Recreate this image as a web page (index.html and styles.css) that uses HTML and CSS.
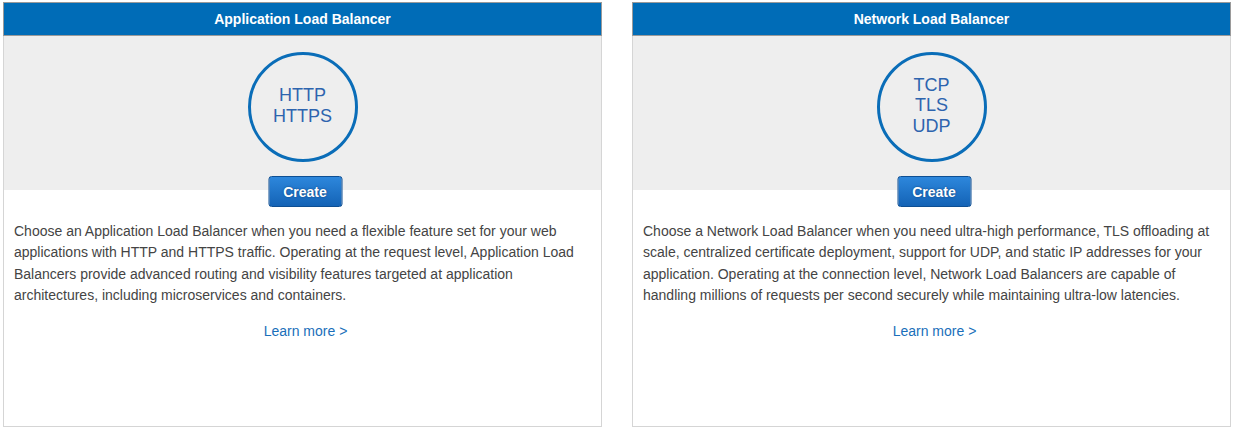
FILE: index.html
```html
<!DOCTYPE html>
<html>
<head>
<meta charset="utf-8">
<link rel="stylesheet" href="styles.css">
</head>
<body>
<div class="cards">
  <div class="card">
    <div class="card-header">Application Load Balancer</div>
    <div class="hero">
      <div class="circle"><span>HTTP<br>HTTPS</span></div>
      <button class="create">Create</button>
    </div>
    <div class="body">
      <p class="desc">Choose an Application Load Balancer when you need a flexible feature set for your web applications with HTTP and HTTPS traffic. Operating at the request level, Application Load Balancers provide advanced routing and visibility features targeted at application architectures, including microservices and containers.</p>
      <a class="learn" href="#">Learn more &gt;</a>
    </div>
  </div>
  <div class="card">
    <div class="card-header">Network Load Balancer</div>
    <div class="hero">
      <div class="circle"><span>TCP<br>TLS<br>UDP</span></div>
      <button class="create">Create</button>
    </div>
    <div class="body">
      <p class="desc">Choose a Network Load Balancer when you need ultra-high performance, TLS offloading at scale, centralized certificate deployment, support for UDP, and static IP addresses for your application. Operating at the connection level, Network Load Balancers are capable of handling millions of requests per second securely while maintaining ultra-low latencies.</p>
      <a class="learn" href="#">Learn more &gt;</a>
    </div>
  </div>
</div>
</body>
</html>
```
FILE: styles.css
```css
html, body {
  margin: 0;
  padding: 0;
  background: #fff;
}
body {
  padding: 2px 4px 0 3px;
  font-family: Arial, "Liberation Sans", sans-serif;
}
.cards {
  display: flex;
  gap: 30px;
}
.card {
  width: 599px;
  height: 425px;
  box-sizing: border-box;
  border: 1px solid #d5d5d5;
  display: flex;
  flex-direction: column;
}
.card-header {
  background: #006cb7;
  border: 1px solid #9a9a9a;
  margin: -1px -1px 0 -1px;
  height: 34px;
  box-sizing: border-box;
  color: #fff;
  font-weight: bold;
  font-size: 14px;
  display: flex;
  align-items: center;
  justify-content: center;
}
.hero {
  background: #eeeeee;
  height: 154px;
  display: flex;
  flex-direction: column;
  align-items: center;
  position: relative;
}
.circle {
  margin-top: 16px;
  width: 110px;
  height: 110px;
  box-sizing: border-box;
  border: 3px solid #0a6db8;
  border-radius: 50%;
  display: flex;
  align-items: center;
  justify-content: center;
  text-align: center;
  color: #2d64ae;
  font-size: 18px;
  line-height: 20.5px;
}
.circle span {
  margin-top: -3px;
}
.create {
  position: absolute;
  top: 140px;
  left: 50%;
  transform: translateX(calc(-50% + 2.5px));
  width: 74px;
  height: 31px;
  box-sizing: border-box;
  border: 1px solid #0e4f93;
  border-radius: 3px;
  background: linear-gradient(#2d87dc, #1463b6);
  color: #fff;
  font-family: Arial, "Liberation Sans", sans-serif;
  font-weight: bold;
  font-size: 14px;
  text-shadow: 0 0 2px #0b3f78;
  padding: 0;
  z-index: 1;
}
.body {
  padding: 31px 10px 0 10px;
  display: flex;
  flex-direction: column;
  align-items: center;
}
.desc {
  margin: 0;
  font-size: 14px;
  line-height: 21.3px;
  color: #444;
  align-self: stretch;
}
.learn {
  margin-top: 17px;
  margin-left: 6px;
  font-size: 14px;
  color: #1a6fba;
  text-decoration: none;
}
```
